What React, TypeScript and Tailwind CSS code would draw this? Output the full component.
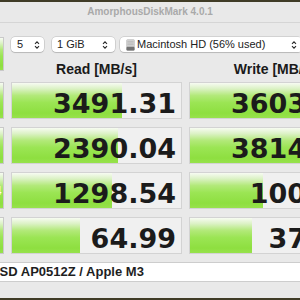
import React from "react";

// bar fill, same gradient for the test buttons and the score bars
const GREEN =
  "bg-[linear-gradient(to_bottom,#f7fbf2_0%,#dcf2c6_16%,#b2e979_36%,#9be554_56%,#8edf40_86%,#97e24c_100%)]";

type Row = { label: string; read: number; write: number };

const rows: Row[] = [
  { label: "SEQ1M QD8", read: 3491.31, write: 3603.75 },
  { label: "SEQ1M QD1", read: 2390.04, write: 3814.27 },
  { label: "RND4K QD64", read: 1298.54, write: 100.96 },
  { label: "RND4K QD1", read: 64.99, write: 37.35 },
];

// log scale, like the app
const barWidth = (v: number) => Math.round(24.3 * Math.log10(v) + 24);

function Chevrons() {
  return (
    <svg width="6" height="10" viewBox="0 0 6 10" fill="none">
      <path d="M1 3.8 L3 1.8 L5 3.8" stroke="#2a2a2a" strokeWidth="1.1" />
      <path d="M1 6.2 L3 8.2 L5 6.2" stroke="#2a2a2a" strokeWidth="1.1" />
    </svg>
  );
}

function DiskIcon() {
  return (
    <svg width="9" height="12" viewBox="0 0 9 12">
      <rect x="0.5" y="0.5" width="8" height="11" rx="1" fill="#a3a3a3" />
      <rect x="1" y="1" width="7" height="6.5" fill="#cfcfcf" />
      <path d="M1.5 2.5 H7.5 M1.5 4 H7.5 M1.5 5.5 H7.5" stroke="#b4b4b4" strokeWidth="0.6" />
      <rect x="0.5" y="8" width="8" height="3.5" rx="0.8" fill="#727272" />
    </svg>
  );
}

function Select({
  className,
  children,
}: {
  className?: string;
  children: React.ReactNode;
}) {
  return (
    <div
      className={`flex h-[15px] items-center justify-between rounded-[4px] bg-white text-[11px] leading-none text-[#222] shadow-[0_0_0_0.5px_rgba(0,0,0,0.2),0_1px_1px_rgba(0,0,0,0.12)] ${className ?? ""}`}
    >
      {children}
      <Chevrons />
    </div>
  );
}

function ScoreCell({ value }: { value: number }) {
  return (
    <div className="relative flex h-[37px] items-center justify-end overflow-hidden border border-[#d3d3d3] bg-[#f0f0f0] pr-[5px] pt-[5px]">
      <div
        className={`absolute inset-y-0 left-0 ${GREEN}`}
        style={{ width: barWidth(value) }}
      />
      <span className="relative font-['DejaVu_Sans',sans-serif] text-[27px] font-bold leading-none text-[#1b1b1b]">
        {value.toFixed(2)}
      </span>
    </div>
  );
}

export default function App() {
  return (
    <div className="h-[300px] w-[300px] overflow-hidden bg-[#403c27] pt-[2px] font-['Liberation_Sans',Arial,sans-serif]">
      <div className="ml-[-85px] w-[470px] bg-[#e9e9e9]">
        {/* title bar */}
        <div className="h-[21px] border-b border-[#d5d5d5] text-center text-[10px] font-bold leading-[20px] text-[#a9a9a9]">
          AmorphousDiskMark 4.0.1
        </div>

        <div className="px-[8px] pb-[16px] pt-[14px]">
          <div className="grid grid-cols-[81px_171px_171px] grid-rows-[15px_14px_37px_37px_37px_37px_20px] gap-x-[7px] gap-y-[8px]">
            <div
              className={`row-span-2 flex h-[34px] items-center justify-center border border-[#c9c9c9] text-[13px] font-bold text-white ${GREEN}`}
            >
              All
            </div>

            <div className="col-span-2 flex items-center">
              <Select className="w-[33px] pl-[6px] pr-[4px]">
                <span>5</span>
              </Select>
              <Select className="ml-[8px] w-[63px] pl-[5px] pr-[7px]">
                <span>1 GiB</span>
              </Select>
              <Select className="ml-[5px] w-[182px] pl-[6px] pr-[5px]">
                <span className="flex items-center gap-[2px]">
                  <DiskIcon />
                  <span>Macintosh HD (56% used)</span>
                </span>
              </Select>
            </div>

            <div className="pt-[2px] text-center text-[14px] font-bold leading-[14px] text-[#1a1a1a]">
              Read [MB/s]
            </div>
            <div className="pt-[2px] text-center text-[14px] font-bold leading-[14px] text-[#1a1a1a]">
              Write [MB/s]
            </div>

            {rows.map((r) => (
              <React.Fragment key={r.label}>
                <div
                  className={`flex h-[37px] items-center justify-center border border-[#c9c9c9] text-[12px] font-bold text-white ${GREEN}`}
                >
                  {r.label}
                </div>
                <ScoreCell value={r.read} />
                <ScoreCell value={r.write} />
              </React.Fragment>
            ))}

            <div className="col-span-3 flex h-[20px] items-center border-y border-[#cdcdcd] bg-white pl-[21px] text-[13px] font-bold text-[#1e1e1e]">
              APPLE SSD AP0512Z / Apple M3
            </div>
          </div>
        </div>
      </div>
    </div>
  );
}
